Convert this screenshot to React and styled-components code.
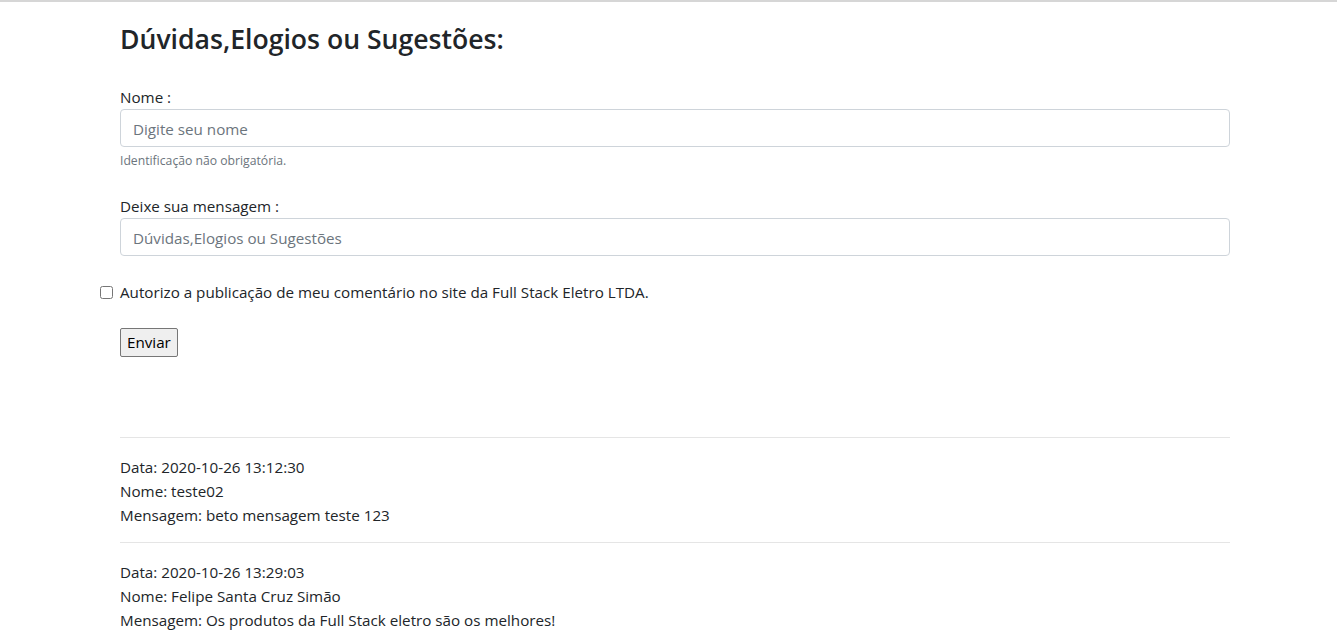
import React from "react";
import styled, { createGlobalStyle } from "styled-components";

const GlobalStyle = createGlobalStyle`
  html, body {
    margin: 0;
    padding: 0;
    background: #fff;
  }
  body {
    font-family: "Open Sans", "Noto Sans", sans-serif;
    font-size: 15.2px;
    line-height: 24px;
    color: #212529;
    border-top: 2px solid #d6d6d6;
  }
  * {
    box-sizing: border-box;
  }
`;

const Container = styled.main`
  width: 1110px;
  margin-left: 120px;
  padding-top: 20px;
`;

const Title = styled.h3`
  margin: 0;
  font-size: 26.6px;
  font-weight: 600;
  line-height: 34px;
`;

const Form = styled.form`
  margin-top: 29px;
`;

const Group = styled.div`
  margin-bottom: ${(p) => p.$gap || 24}px;
`;

const Label = styled.label`
  display: block;
  margin: 0;
`;

const Input = styled.input`
  display: block;
  width: 100%;
  height: 38px;
  padding: 7px 12px 5px;
  font: inherit;
  color: #495057;
  border: 1px solid #ced4da;
  border-radius: 4px;
  background: #fff;
  &::placeholder {
    color: #6c757d;
  }
`;

const Help = styled.small`
  display: block;
  margin-top: 4px;
  font-size: 12.2px;
  line-height: 19px;
  color: #6c757d;
`;

const CheckRow = styled.div`
  display: flex;
  align-items: center;
  margin-left: -20px;
  margin-bottom: 24px;
`;

const Check = styled.input`
  width: 13px;
  height: 13px;
  margin: 0 7px 0 0;
`;

const Button = styled.button`
  font: inherit;
  line-height: 25px;
  padding: 1px 6px;
  color: #000;
  background: #efefef;
  border: 1px solid #767676;
  border-radius: 2px;
`;

const Comments = styled.section`
  margin-top: 80px;
`;

const Rule = styled.hr`
  margin: 0 0 17px;
  border: 0;
  border-top: 1px solid rgba(0, 0, 0, 0.1);
`;

const Comment = styled.div`
  padding-bottom: 15px;
`;

const Line = styled.p`
  margin: 0;
`;

const comments = [
  {
    data: "2020-10-26 13:12:30",
    nome: "teste02",
    mensagem: "beto mensagem teste 123",
  },
  {
    data: "2020-10-26 13:29:03",
    nome: "Felipe Santa Cruz Simão",
    mensagem: "Os produtos da Full Stack eletro são os melhores!",
  },
];

const App = () => {
  return (
    <>
      <GlobalStyle />
      <Container>
        <Title>Dúvidas,Elogios ou Sugestões:</Title>
        <Form onSubmit={(e) => e.preventDefault()}>
          <Group $gap={24}>
            <Label htmlFor="nome">Nome :</Label>
            <Input id="nome" type="text" placeholder="Digite seu nome" />
            <Help>Identificação não obrigatória.</Help>
          </Group>
          <Group $gap={24}>
            <Label htmlFor="msg">Deixe sua mensagem :</Label>
            <Input id="msg" type="text" placeholder="Dúvidas,Elogios ou Sugestões" />
          </Group>
          <CheckRow>
            <Check type="checkbox" id="autorizo" />
            <Label htmlFor="autorizo">
              Autorizo a publicação de meu comentário no site da Full Stack Eletro LTDA.
            </Label>
          </CheckRow>
          <Button type="submit">Enviar</Button>
        </Form>
        <Comments>
          {comments.map((c) => (
            <Comment key={c.data}>
              <Rule />
              <Line>Data: {c.data}</Line>
              <Line>Nome: {c.nome}</Line>
              <Line>Mensagem: {c.mensagem}</Line>
            </Comment>
          ))}
        </Comments>
      </Container>
    </>
  );
};

export default App;
